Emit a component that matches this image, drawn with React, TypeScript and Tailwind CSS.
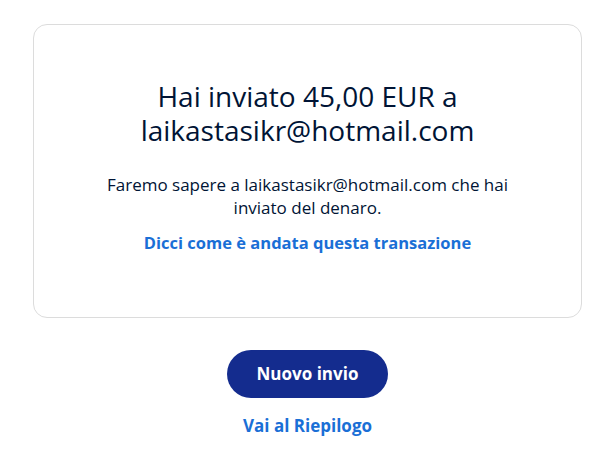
export default function App() {
  return (
    <div
      className="min-h-[465px] bg-white pt-[24px] pl-[33px] text-[#001435]"
      style={{ fontFamily: '"Open Sans", "Noto Sans", sans-serif' }}
    >
      <div className="w-[549px]">
        <div className="flex h-[294px] flex-col items-center rounded-[14px] border border-[#dcdcdc] px-10 pt-[54px] text-center">
          <h1 className="text-[28px] leading-[34px] font-normal text-[#001435]">
            Hai inviato 45,00 EUR a
            <br />
            laikastasikr@hotmail.com
          </h1>
          <p className="mt-[26px] max-w-[440px] text-[17px] leading-[23px] text-[#001435]">
            Faremo sapere a laikastasikr@hotmail.com che hai inviato del denaro.
          </p>
          <a href="#" className="mt-[12px] text-[16.5px] leading-[23px] font-bold text-[#1a6fd6]">
            Dicci come è andata questa transazione
          </a>
        </div>
        <div className="mt-[32px] flex flex-col items-center">
          <button className="h-[48px] w-[161px] rounded-full bg-[#142c8e] text-[17px] font-bold text-white">
            Nuovo invio
          </button>
          <a href="#" className="mt-[17px] text-[17px] leading-[22px] font-bold text-[#1a6fd6]">
            Vai al Riepilogo
          </a>
        </div>
      </div>
    </div>
  );
}
